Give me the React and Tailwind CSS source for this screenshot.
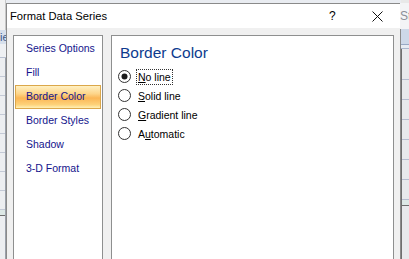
import React from 'react'

const font = { fontFamily: '"Liberation Sans", Arial, sans-serif' }

const navItems = ['Series Options', 'Fill', 'Border Color', 'Border Styles', 'Shadow', '3-D Format']

const options = [
  { pre: '', key: 'N', post: 'o line', checked: true },
  { pre: '', key: 'S', post: 'olid line' },
  { pre: '', key: 'G', post: 'radient line' },
  { pre: 'A', key: 'u', post: 'tomatic' },
]

function Radio({ checked }) {
  return (
    <svg width="13" height="13" viewBox="0 0 13 13" className="shrink-0">
      <circle cx="6.5" cy="6.5" r="6" fill="#fff" stroke="#333" strokeWidth="1" />
      {checked && <circle cx="6.5" cy="6.5" r="3" fill="#1a1a1a" />}
    </svg>
  )
}

const App = () => {
  return (
    <div className="w-[409px] h-[259px] overflow-hidden flex bg-[#e9ecf1]" style={font}>
      {/* spreadsheet behind, left edge */}
      <div className="w-[6px] flex flex-col shrink-0">
        <div className="h-[30px] bg-[#f2f2f2] border-r border-[#c8c8c8]" />
        <div className="h-[14px] bg-[#d7e0ec] text-[11px] leading-[14px] text-[#3a5a8c] overflow-hidden">ie</div>
        <div className="h-[14px] bg-[#eef0f3] border-b border-[#b8c0d0]" />
        <div className="flex-1 flex flex-col bg-[#eceef1] border-r border-[#9aa0aa]">
          <div className="h-[19px] border-b border-[#c3c9d6]" />
          <div className="h-[19px] border-b border-[#c3c9d6]" />
          <div className="h-[19px] border-b border-[#c3c9d6]" />
          <div className="h-[19px] border-b border-[#c3c9d6]" />
          <div className="h-[19px] border-b border-[#c3c9d6]" />
          <div className="h-[19px] border-b border-[#c3c9d6]" />
          <div className="h-[19px] border-b border-[#c3c9d6]" />
          <div className="h-[19px] border-b border-[#c3c9d6]" />
          <div className="h-[6px] bg-[#dde8e6] border-b border-[#6e6e6e]" />
        </div>
      </div>

      {/* dialog */}
      <div className="mt-[3px] w-[395px] h-[270px] shrink-0 flex flex-col border border-[#8a8a8a] bg-[#f0f0f0]">
        <div className="h-[24px] bg-white flex items-center pl-[3px] pr-[17px] text-[11.2px] text-black">
          <span className="flex-1">Format Data Series</span>
          <span className="w-[8px] text-[12px] mr-[35px]">?</span>
          <svg width="11" height="11" viewBox="0 0 11 11">
            <path d="M0.5 0.5 L10.5 10.5 M10.5 0.5 L0.5 10.5" stroke="#111" strokeWidth="1" />
          </svg>
        </div>

        <div className="flex-1 flex pt-[7px] pl-[6px] pr-[6px] gap-[8px]">
          <div className="w-[90px] bg-white border border-[#8e8f8f] flex flex-col pt-[1px] px-[1px]">
            {navItems.map((item) => {
              const active = item === 'Border Color'
              return (
                <div
                  key={item}
                  className={`h-[24px] flex items-center whitespace-nowrap text-[10.5px] text-[#14148c] ${
                    active
                      ? 'border border-[#dba74a] bg-[linear-gradient(#fff0c2_0%,#fdd58a_35%,#fbb655_55%,#fdd27a_85%,#fff1b6_100%)] pl-[10px]'
                      : 'pl-[11px]'
                  }`}
                >
                  {item}
                </div>
              )
            })}
          </div>

          <div className="flex-1 bg-white border border-[#8e8f8f] pl-[6px] pt-[5px]">
            <div className="text-[15.5px] leading-[24px] text-[#0d3b8e] pl-[2px]">Border Color</div>
            <div className="flex flex-col pt-[2px]">
              {options.map((o) => (
                <div key={o.post} className="h-[19px] flex items-center gap-[6px] text-[10.5px] text-black">
                  <Radio checked={o.checked} />
                  <span
                    className={`leading-[14px] px-[1px] ${
                      o.checked ? 'outline outline-1 outline-dotted outline-[#333]' : ''
                    }`}
                  >
                    {o.pre}
                    <span className="underline">{o.key}</span>
                    {o.post}
                  </span>
                </div>
              ))}
            </div>
          </div>
        </div>
      </div>

      {/* spreadsheet behind, right edge */}
      <div className="flex-1 flex flex-col">
        <div className="h-[3px] bg-[#e8e8e8]" />
        <div className="h-[26px] bg-[#f3f4f6] text-[12px] leading-[26px] text-[#8a8f98] overflow-hidden whitespace-nowrap -ml-[1px]">St</div>
        <div className="h-[16px] bg-[#cdd8e8] border-b border-[#98a8c4]" />
        <div className="h-[4px] bg-[#e6ebf2] border-b border-[#a9b6cc]" />
        <div className="flex-1 flex flex-col bg-[#e8e9ec] border-l border-[#6f6f6f]">
          <div className="h-[31px] border-b border-[#b6bdd0]" />
          <div className="h-[20px] border-b border-[#b6bdd0]" />
          <div className="h-[20px] border-b border-[#b6bdd0]" />
          <div className="h-[20px] border-b border-[#b6bdd0]" />
          <div className="h-[20px] border-b border-[#b6bdd0]" />
          <div className="h-[20px] border-b border-[#b6bdd0]" />
          <div className="h-[20px] border-b border-[#b6bdd0]" />
          <div className="h-[6px] bg-[#dde8e6] border-b border-[#6e6e6e]" />
        </div>
      </div>
    </div>
  )
}

export default App
